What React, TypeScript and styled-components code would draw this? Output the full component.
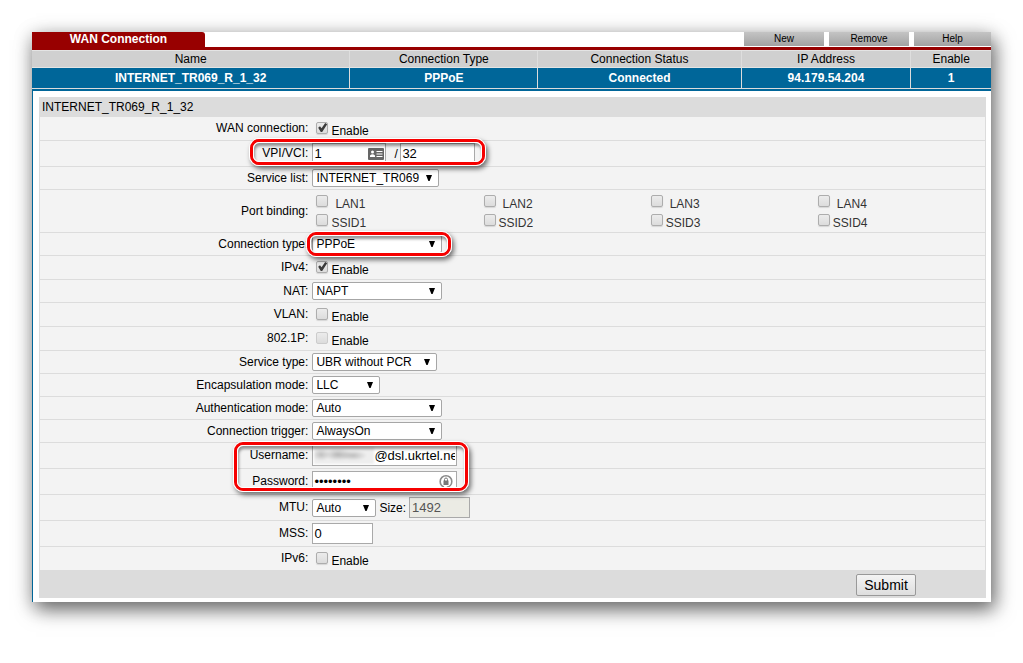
import React, { useId, useState } from 'react';
import styled, { createGlobalStyle, css } from 'styled-components';

const GlobalStyle = createGlobalStyle`
  *, *::before, *::after { box-sizing: border-box; }
  body {
    margin: 0;
    background: #fff;
    color: #000;
    font: 12px/14px "Liberation Sans", Arial, sans-serif;
  }
`;

const Page = styled.div`
  padding: 32px 32px 60px;
`;

const Panel = styled.main`
  background: #fff;
  box-shadow: 4px 8px 18px rgba(0, 0, 0, 0.5), 0 3px 18px rgba(0, 0, 0, 0.22);
`;

const TopBar = styled.header`
  display: flex;
  justify-content: space-between;
  align-items: flex-start;
  height: 18px;
  border-bottom: 3px solid #980000;
`;

const Tab = styled.h1`
  width: 173px;
  height: 15px;
  margin: 0;
  border-radius: 0 3px 0 0;
  background: #980000;
  color: #fff;
  font-size: 12px;
  line-height: 15px;
  text-align: center;
`;

const Actions = styled.div`
  display: flex;
  gap: 5px;
`;

const ActionButton = styled.button<{ $width: number }>`
  width: ${(p) => p.$width}px;
  height: 14px;
  padding: 0;
  border: 0;
  background: linear-gradient(#c4c4c4, #a2a2a2);
  color: #000;
  font: 10px/14px "Liberation Sans", Arial, sans-serif;
`;

const Connections = styled.table`
  width: 100%;
  border-collapse: separate;
  border-spacing: 0;
  table-layout: fixed;
  border-top: 1px solid #e4e4e4;
  border-bottom: 2px solid #006699;
  text-align: center;
`;

const HeadCell = styled.th<{ $width: string }>`
  width: ${(p) => p.$width};
  height: 17px;
  padding: 0;
  border-right: 1px solid #dedede;
  border-bottom: 1px solid #e4e4e4;
  background: #d0d0d0;
  font-weight: 400;
  &:last-child { border-right: 0; }
`;

const Cell = styled.td`
  height: 21px;
  padding: 0;
  border-right: 1px solid #dcdcdc;
  border-bottom: 1px solid #dcdcdc;
  background: #006699;
  color: #fff;
  font-weight: 700;
  &:last-child { border-right: 0; }
`;

const Body = styled.div`
  padding: 6px 5px 4px 6px;
  border-left: 1px solid #006699;
`;

const Form = styled.form`
  border: 1px solid #dcdcdc;
  border-width: 0 1px;
  background: #f3f3f3;
`;

const FormTitle = styled.h2`
  height: 20px;
  margin: 0;
  padding-left: 2px;
  background: #dcdcdc;
  font-size: 12px;
  font-weight: 400;
  line-height: 20px;
`;

const heights = { check: 24, select: 23, text: 26, ports: 43 };

const Row = styled.div<{ $kind: keyof typeof heights }>`
  display: grid;
  grid-template-columns: 28.4% 1fr;
  column-gap: 4px;
  align-items: center;
  min-height: ${(p) => heights[p.$kind]}px;
  border-bottom: 1px solid #dcdcdc;
`;

const labelStyle = css`
  padding-bottom: 1px;
  text-align: right;
`;
const RowLabel = styled.label`${labelStyle}`;
const RowCaption = styled.span`${labelStyle}`;

const Control = styled.div`
  position: relative;
  display: flex;
  align-items: center;
`;

const SelectBox = styled.span<{ $width: number }>`
  position: relative;
  display: block;
  width: ${(p) => p.$width}px;
  height: 18px;
`;

const NativeSelect = styled.select`
  appearance: none;
  display: block;
  width: 100%;
  height: 18px;
  padding: 0 16px 0 3px;
  border: 1px solid #a6a6a6;
  border-radius: 2px;
  background: #fff;
  color: #000;
  font: 12px/14px "Liberation Sans", Arial, sans-serif;
`;

const Arrow = styled.svg`
  position: absolute;
  top: 6px;
  right: 7px;
  pointer-events: none;
`;

const TextInput = styled.input<{ $width: number; $indent?: number }>`
  width: ${(p) => p.$width}px;
  height: 21px;
  padding: 1px 1px 1px ${(p) => p.$indent ?? 1}px;
  border: 1px solid #a9a9a9;
  border-radius: 0;
  background: #fff;
  color: #000;
  font: 13px/17px "Liberation Sans", Arial, sans-serif;
  &:disabled { background: #ebebe4; color: #545454; }
`;

const FieldBox = styled.span`
  position: relative;
  display: flex;
`;

const FieldIcon = styled.svg`
  position: absolute;
  top: 3px;
  right: 2px;
`;

const Smudge = styled.span`
  position: absolute;
  top: 2px;
  left: 2px;
  width: 60px;
  height: 17px;
  background: radial-gradient(ellipse 14px 6px at 40% 45%, #b4b4b4, transparent),
    radial-gradient(ellipse 14px 5px at 65% 50%, #bbb, transparent),
    radial-gradient(ellipse 9px 6px at 12% 45%, #bcbcbc, transparent), #eee;
  filter: blur(1px);
`;

const Separator = styled.span`
  width: 14px;
  padding-left: 8px;
`;

const SizeLabel = styled.label`
  padding: 0 3px;
`;

const CheckLabel = styled.label<{ $muted?: boolean }>`
  display: flex;
  align-items: center;
  gap: 3px;
  padding-left: 4px;
  color: ${(p) => (p.$muted ? '#333' : '#000')};
`;

const CheckText = styled.span<{ $inset?: boolean }>`
  padding: 4px 0 0 ${(p) => (p.$inset ? 4 : 0)}px;
`;

const CheckBox = styled.input`
  appearance: none;
  flex: none;
  width: 12px;
  height: 12px;
  margin: 0 0 2px;
  border: 1px solid #adadad;
  border-radius: 2px;
  background: linear-gradient(#ececec, #dcdcdc);
  box-shadow: 0 1px 1px rgba(0, 0, 0, 0.12);
  &:disabled { border-color: #ccc; box-shadow: none; }
  &:checked::before {
    content: "";
    display: block;
    width: 10px;
    height: 10px;
    background: #3c3c3c;
    clip-path: polygon(8% 52%, 26% 38%, 42% 58%, 78% 6%, 98% 18%, 48% 94%, 34% 94%);
  }
`;

const PortGrid = styled.div`
  display: grid;
  flex: 1;
  grid-template-columns: repeat(4, 1fr);
  grid-auto-rows: 19px;
  padding-right: 4px;
`;

const Ring = styled.span<{ $left: number; $top: number; $width: number; $height: number }>`
  position: absolute;
  z-index: 1;
  left: ${(p) => p.$left}px;
  top: ${(p) => p.$top}px;
  width: ${(p) => p.$width}px;
  height: ${(p) => p.$height}px;
  border: 1px solid #fff;
  border-radius: 10px;
  box-shadow: 2px 3px 5px rgba(0, 0, 0, 0.55);
  pointer-events: none;
  &::before {
    content: "";
    position: absolute;
    inset: 0;
    border: 3px solid #f60000;
    border-radius: 9px;
  }
  &::after {
    content: "";
    position: absolute;
    inset: 3px;
    border: 1px solid #fff;
    border-radius: 6px;
    box-shadow: inset 1px 3px 3px rgba(0, 0, 0, 0.4);
  }
`;

const Footer = styled.footer`
  display: flex;
  justify-content: flex-end;
  align-items: center;
  height: 27px;
  padding-right: 7.3%;
  background: #dcdcdc;
`;

const SubmitButton = styled.button`
  width: 60px;
  height: 22px;
  padding: 0;
  border: 1px solid #999;
  border-radius: 2px;
  background: linear-gradient(#f4f4f4, #dedede);
  color: #000;
  font: 14px/18px "Liberation Sans", Arial, sans-serif;
`;

type SelectProps = { id: string; width: number; options: string[] };

function Select({ id, width, options }: SelectProps) {
  return (
    <SelectBox $width={width}>
      <NativeSelect id={id}>
        {options.map((o) => <option key={o}>{o}</option>)}
      </NativeSelect>
      <Arrow width="6" height="6" viewBox="0 0 6 6" aria-hidden="true">
        <path d="M0 0H6L3.6 6H2.4Z" fill="#000" />
      </Arrow>
    </SelectBox>
  );
}

function SelectRow({ label, width, options, children }: {
  label: string; width: number; options: string[]; children?: React.ReactNode;
}) {
  const id = useId();
  return (
    <Row $kind="select">
      <RowLabel htmlFor={id}>{label}</RowLabel>
      <Control>
        <Select id={id} width={width} options={options} />
        {children}
      </Control>
    </Row>
  );
}

function Check({ text, initial = false, disabled, muted, inset }: {
  text: string; initial?: boolean; disabled?: boolean; muted?: boolean; inset?: boolean;
}) {
  const [on, setOn] = useState(initial);
  return (
    <CheckLabel $muted={muted}>
      <CheckBox type="checkbox" checked={on} disabled={disabled} onChange={(e) => setOn(e.target.checked)} />
      <CheckText $inset={inset}>{text}</CheckText>
    </CheckLabel>
  );
}

function CheckRow({ label, initial, disabled }: { label: string; initial?: boolean; disabled?: boolean }) {
  return (
    <Row $kind="check">
      <RowCaption>{label}</RowCaption>
      <Control><Check text="Enable" initial={initial} disabled={disabled} /></Control>
    </Row>
  );
}

const columns: [string, string, string][] = [
  ['Name', 'INTERNET_TR069_R_1_32', '33.2%'],
  ['Connection Type', 'PPPoE', '19.6%'],
  ['Connection Status', 'Connected', '21.2%'],
  ['IP Address', '94.179.54.204', '17.7%'],
  ['Enable', '1', '8.3%'],
];

const ports = ['LAN1', 'LAN2', 'LAN3', 'LAN4', 'SSID1', 'SSID2', 'SSID3', 'SSID4'];

export default function App() {
  return (
    <Page>
      <GlobalStyle />
      <Panel>
        <TopBar>
          <Tab>WAN Connection</Tab>
          <Actions>
            <ActionButton type="button" $width={80}>New</ActionButton>
            <ActionButton type="button" $width={80}>Remove</ActionButton>
            <ActionButton type="button" $width={77}>Help</ActionButton>
          </Actions>
        </TopBar>
        <Connections>
          <thead>
            <tr>{columns.map(([head, , width]) => <HeadCell key={head} $width={width}>{head}</HeadCell>)}</tr>
          </thead>
          <tbody>
            <tr>{columns.map(([head, value]) => <Cell key={head}>{value}</Cell>)}</tr>
          </tbody>
        </Connections>
        <Body>
          <Form onSubmit={(e) => e.preventDefault()}>
            <FormTitle>INTERNET_TR069_R_1_32</FormTitle>
            <CheckRow label="WAN connection:" initial />
            <Row $kind="text">
              <RowLabel htmlFor="vpi">VPI/VCI:</RowLabel>
              <Control>
                <FieldBox>
                  <TextInput id="vpi" $width={74} defaultValue="1" />
                  <FieldIcon width="16" height="15" viewBox="0 0 16 15" aria-hidden="true">
                    <rect x="0" y="2" width="16" height="12" rx="1" fill="#666" />
                    <circle cx="4.5" cy="6" r="1.5" fill="#fff" />
                    <path d="M2 11V9.5Q4.5 7 7 9.5V11Z" fill="#fff" />
                    <path d="M8.5 5.5H14.5M8.5 8H14.5M8.5 10.5H14.5" stroke="#fff" />
                  </FieldIcon>
                </FieldBox>
                <Separator>/</Separator>
                <TextInput aria-label="VCI" $width={75} defaultValue="32" />
                <Ring $left={-63} $top={-5} $width={237} $height={28} />
              </Control>
            </Row>
            <SelectRow label="Service list:" width={127} options={['INTERNET_TR069']} />
            <Row $kind="ports">
              <RowCaption>Port binding:</RowCaption>
              <Control>
                <PortGrid>
                  {ports.map((p) => <Check key={p} text={p} muted inset={p.startsWith('LAN')} />)}
                </PortGrid>
              </Control>
            </Row>
            <SelectRow label="Connection type:" width={130} options={['PPPoE']}>
              <Ring $left={-6} $top={-4} $width={146} $height={26} />
            </SelectRow>
            <CheckRow label="IPv4:" initial />
            <SelectRow label="NAT:" width={130} options={['NAPT']} />
            <CheckRow label="VLAN:" />
            <CheckRow label="802.1P:" disabled />
            <SelectRow label="Service type:" width={125} options={['UBR without PCR']} />
            <SelectRow label="Encapsulation mode:" width={68} options={['LLC']} />
            <SelectRow label="Authentication mode:" width={130} options={['Auto']} />
            <SelectRow label="Connection trigger:" width={130} options={['AlwaysOn']} />
            <Row $kind="text">
              <RowLabel htmlFor="user">Username:</RowLabel>
              <Control>
                <FieldBox>
                  <TextInput id="user" $width={145} $indent={61} defaultValue="@dsl.ukrtel.net" />
                  <Smudge />
                </FieldBox>
                <Ring $left={-79} $top={-4} $width={236} $height={51} />
              </Control>
            </Row>
            <Row $kind="text">
              <RowLabel htmlFor="pass">Password:</RowLabel>
              <Control>
                <FieldBox>
                  <TextInput id="pass" type="password" $width={145} defaultValue="password" />
                  <FieldIcon width="18" height="15" viewBox="0 0 18 15" aria-hidden="true">
                    <circle cx="9" cy="7.5" r="5.8" fill="none" stroke="#8a8a8a" strokeWidth="1.6" strokeDasharray="29 3" strokeDashoffset="-11" />
                    <rect x="6.5" y="6.5" width="5" height="4.5" fill="#777" />
                    <path d="M7.5 7V5.5a1.5 1.5 0 0 1 3 0V7" fill="none" stroke="#777" />
                  </FieldIcon>
                </FieldBox>
              </Control>
            </Row>
            <Row $kind="text">
              <RowLabel htmlFor="mtu">MTU:</RowLabel>
              <Control>
                <Select id="mtu" width={64} options={['Auto']} />
                <SizeLabel htmlFor="size">Size:</SizeLabel>
                <TextInput id="size" $width={61} $indent={2} defaultValue="1492" disabled />
              </Control>
            </Row>
            <Row $kind="text">
              <RowLabel htmlFor="mss">MSS:</RowLabel>
              <Control><TextInput id="mss" $width={61} defaultValue="0" /></Control>
            </Row>
            <CheckRow label="IPv6:" />
            <Footer><SubmitButton type="submit">Submit</SubmitButton></Footer>
          </Form>
        </Body>
      </Panel>
    </Page>
  );
}
